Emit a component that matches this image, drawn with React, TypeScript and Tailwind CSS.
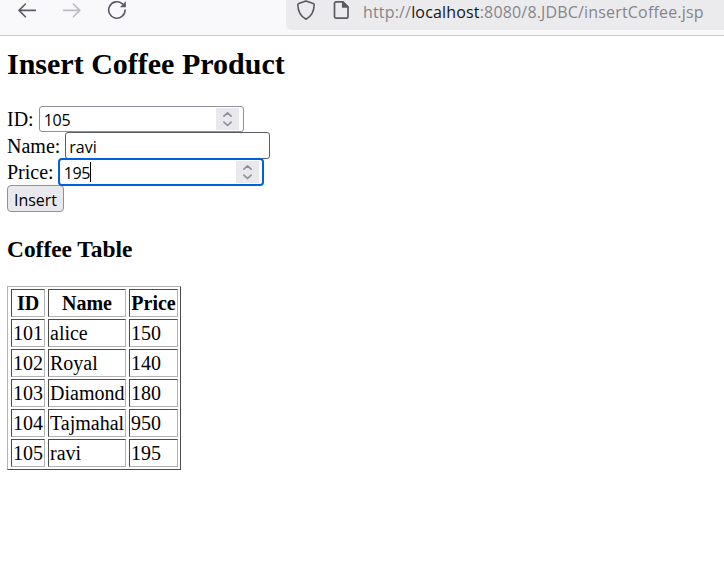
const rows = [
  ['101', 'alice', '150'],
  ['102', 'Royal', '140'],
  ['103', 'Diamond', '180'],
  ['104', 'Tajmahal', '950'],
  ['105', 'ravi', '195'],
];

const cell = 'h-7 border border-t-[#4d4d4d] border-l-[#4d4d4d] border-r-[#b3b3b3] border-b-[#b3b3b3] leading-[27px] whitespace-nowrap';
const sans = "font-['Open_Sans','Noto_Sans',sans-serif]";

function Spinner() {
  return (
    <span className="flex h-[22px] w-[23px] items-center justify-center bg-[#e9e9ed]">
      <svg width="11" height="16" viewBox="0 0 11 16" fill="none" stroke="#8f8f9d" strokeWidth="1.7" strokeLinecap="round" strokeLinejoin="round">
        <path d="M1.9 5.2 5.5 1.8l3.6 3.4M1.9 11.1l3.6 3.4 3.6-3.4" />
      </svg>
    </span>
  );
}

function Toolbar() {
  return (
    <header className="flex h-9 border-b border-[#cccccf] bg-[#f9f9fb]">
      <div className="flex w-[286px] shrink-0 pl-[17px]">
        <svg className="shrink-0" width="20" height="20" viewBox="0 0 20 20" fill="none" stroke="#5b5b66" strokeWidth="1.6" strokeLinecap="round" strokeLinejoin="round">
          <path d="M18.3 10.4H2M8.4 4 2 10.4l6.4 6.4" />
        </svg>
        <svg className="ml-[25px] shrink-0" width="20" height="20" viewBox="0 0 20 20" fill="none" stroke="#bcbcc2" strokeWidth="1.6" strokeLinecap="round" strokeLinejoin="round">
          <path d="M1.5 10.4h16.3M11.4 4l6.4 6.4-6.4 6.4" />
        </svg>
        <svg className="ml-[25px] shrink-0" width="20" height="20" viewBox="0 0 20 20" fill="none" stroke="#5b5b66" strokeWidth="1.6" strokeLinecap="round">
          <path d="M18.1 10a8.2 8.2 0 1 1-2.7-6.1" />
          <path d="M18.9 1.2v6h-6z" fill="#5b5b66" stroke="none" />
        </svg>
      </div>
      <div className="flex h-[30px] flex-1 rounded-bl-[5px] bg-[#ebebed] pl-2.5">
        <svg className="shrink-0" width="20" height="21" viewBox="0 0 20 21" fill="none" stroke="#5b5b61" strokeWidth="1.6" strokeLinejoin="round">
          <path d="M10 .9 17.3 3.6q.9.3.9 1.2C18 11.3 16 16.2 10 19.2 4 16.2 2 11.3 1.8 4.8q0-.9.9-1.2z" />
        </svg>
        <svg className="ml-[17px] shrink-0" width="17" height="20" viewBox="0 0 17 20" fill="none" stroke="#5b5b61" strokeWidth="1.7" strokeLinejoin="round">
          <path d="M9.8 1.8H3.2a1.7 1.7 0 0 0-1.7 1.7v13a1.7 1.7 0 0 0 1.7 1.7h10.1a1.7 1.7 0 0 0 1.7-1.7V7z" />
          <path d="M9.8 1.8V7H15z" fill="#5b5b61" />
        </svg>
        <span className={`${sans} ml-[13px] text-[16px] leading-[25px] tracking-[0.17px] whitespace-nowrap text-[#85858a]`}>
          http://<span className="text-[#15141a]">localhost</span>:8080/8.JDBC/insertCoffee.jsp
        </span>
      </div>
    </header>
  );
}

export default function App() {
  return (
    <div className="h-[584px] w-[724px] overflow-hidden bg-white font-['Liberation_Serif',serif] text-[20px] text-black">
      <Toolbar />
      <main className="pl-[7px]">
        <h2 className="pt-[11px] text-[30px] leading-[34px] font-bold">Insert Coffee Product</h2>
        <form className="mt-[25px]">
          <div className="flex h-[26px]">
            <label className="mr-[5px] leading-[27px]">ID:</label>
            <div className={`${sans} flex h-[26px] w-[205px] items-center justify-between rounded-[3px] border border-[#8f8f9d] pr-1 pl-1 text-[16px]`}>
              <span className="pt-0.5 tracking-[-0.2px]">105</span>
              <Spinner />
            </div>
          </div>
          <div className="flex h-[26px]">
            <label className="mr-[5px] leading-[29px]">Name:</label>
            <div className={`${sans} flex h-[27px] w-[205px] items-center rounded-[3px] border border-[#5b5b66] pt-0.5 pl-[3px] text-[16px]`}>ravi</div>
          </div>
          <div className="relative flex h-[27px]">
            <label className="mr-1 leading-[29px]">Price:</label>
            <div className={`${sans} flex h-7 w-[206px] items-center justify-between rounded-[4px] border-2 border-[#0060df] bg-white pr-[3px] pl-1 text-[16px]`}>
              <span className="flex h-5 items-center border-r border-black pt-0.5 tracking-[-0.3px]">195</span>
              <Spinner />
            </div>
          </div>
          <button type="button" className={`${sans} block h-[27px] w-[57px] rounded-[4px] border border-[#8f8f9d] bg-[#e9e9ed] text-center text-[16px] leading-[28px]`}>
            Insert
          </button>
        </form>
        <h3 className="mt-[24px] text-[23.4px] leading-[27px] font-bold">Coffee Table</h3>
        <div className="mt-[23px] grid h-[184px] w-[174px] grid-cols-[34px_78px_49px] content-start gap-x-[3px] gap-y-[2px] border border-t-[#b3b3b3] border-l-[#b3b3b3] border-r-[#4d4d4d] border-b-[#4d4d4d] pt-[2px] pl-[3px]">
          {['ID', 'Name', 'Price'].map((t) => (
            <div key={t} className={`${cell} text-center font-bold`}>{t}</div>
          ))}
          {rows.flat().map((t, i) => (
            <div key={i} className={`${cell} pl-px`}>{t}</div>
          ))}
        </div>
      </main>
    </div>
  );
}
